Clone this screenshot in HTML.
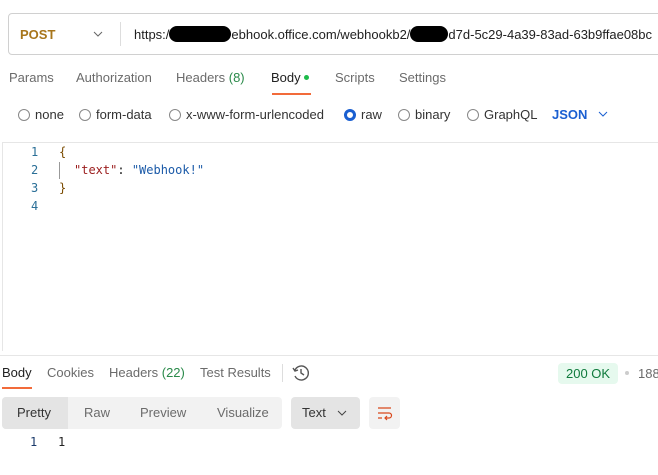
<!DOCTYPE html>
<html><head><style>
body{margin:0;width:658px;height:475px;overflow:hidden;background:#fff;font-family:"Liberation Sans",sans-serif;font-size:13px;color:#212121;position:relative}
.a{position:absolute;white-space:nowrap}
.g{color:#6b6b6b}
.rad{display:inline-block;width:12px;height:12px;border:1px solid #888;border-radius:50%;vertical-align:-2px;margin-right:5px;box-sizing:border-box}
.mono{font-family:"DejaVu Sans Mono","Liberation Mono",monospace;font-size:12px}
.ln{color:#2a6f97}
</style></head><body>
<div class="a" style="left:8px;top:13px;width:660px;height:40px;border:1px solid #d0d0d0;border-radius:4px"></div>
<div class="a" style="left:20px;top:27px;color:#a7751b;font-weight:bold">POST</div>
<svg class="a" style="left:93px;top:30px" width="10" height="8"><path d="M1 2l4 4 4-4" stroke="#666" fill="none"/></svg>
<div class="a" style="left:120px;top:22px;width:1px;height:24px;background:#ddd"></div>
<div class="a" style="left:134px;top:26px">https:/<span style="display:inline-block;width:62px;height:16px;background:#000;border-radius:8px;vertical-align:-3px"></span>ebhook.office.com/webhookb2/<span style="display:inline-block;width:38px;height:16px;background:#000;border-radius:8px;vertical-align:-3px"></span>d7d-5c29-4a39-83ad-63b9ffae08bc</div>

<div class="a g" style="left:9px;top:70px">Params</div>
<div class="a g" style="left:76px;top:70px">Authorization</div>
<div class="a g" style="left:176px;top:70px">Headers <span style="color:#2a8a4a">(8)</span></div>
<div class="a" style="left:271px;top:70px">Body <span style="display:inline-block;width:5px;height:5px;background:#1dbb4a;border-radius:50%;vertical-align:2px"></span></div>
<div class="a" style="left:272px;top:93px;width:39px;height:2px;background:#f26b3a"></div>
<div class="a g" style="left:335px;top:70px">Scripts</div>
<div class="a g" style="left:399px;top:70px">Settings</div>

<div class="a" style="left:18px;top:107px;color:#333"><span class="rad"></span>none</div>
<div class="a" style="left:79px;top:107px;color:#333"><span class="rad"></span>form-data</div>
<div class="a" style="left:169px;top:107px;color:#333"><span class="rad"></span>x-www-form-urlencoded</div>
<div class="a" style="left:344px;top:107px;color:#333"><span class="rad" style="border:3px solid #1a5fd1"></span>raw</div>
<div class="a" style="left:398px;top:107px;color:#333"><span class="rad"></span>binary</div>
<div class="a" style="left:467px;top:107px;color:#333"><span class="rad"></span>GraphQL</div>
<div class="a" style="left:552px;top:107px;color:#1a5fd1;font-weight:bold">JSON</div>
<svg class="a" style="left:598px;top:110px" width="10" height="8"><path d="M1 2l4 4 4-4" stroke="#1a5fd1" fill="none"/></svg>

<div class="a" style="left:2px;top:142px;width:660px;height:208px;border-top:1px solid #e6e6e6;border-left:1px solid #e6e6e6"></div>
<div class="a mono ln" style="left:31px;top:145px">1</div>
<div class="a mono ln" style="left:31px;top:163px">2</div>
<div class="a mono ln" style="left:31px;top:181px">3</div>
<div class="a mono ln" style="left:31px;top:199px">4</div>
<div class="a mono" style="left:59px;top:145px;color:#7a4b00">{</div>
<div class="a" style="left:59px;top:162px;width:1px;height:17px;background:#999"></div>
<div class="a mono" style="left:74px;top:163px"><span style="color:#9b1c1c">"text"</span>: <span style="color:#1b5aa8">"Webhook!"</span></div>
<div class="a mono" style="left:59px;top:181px;color:#7a4b00">}</div>

<div class="a" style="left:0;top:355px;width:658px;height:1px;background:#e6e6e6"></div>
<div class="a" style="left:2px;top:365px">Body</div>
<div class="a" style="left:2px;top:387px;width:30px;height:2px;background:#f26b3a"></div>
<div class="a g" style="left:47px;top:365px">Cookies</div>
<div class="a g" style="left:109px;top:365px">Headers <span style="color:#2a8a4a">(22)</span></div>
<div class="a g" style="left:200px;top:365px">Test Results</div>
<div class="a" style="left:282px;top:364px;width:1px;height:18px;background:#ddd"></div>
<svg class="a" style="left:292px;top:364px" width="18" height="18" viewBox="0 0 18 18"><path d="M3 6A7 7 0 1 1 3 12M9 5v4l3 2M1 4l2 3 3-1" stroke="#555" stroke-width="1.4" fill="none"/></svg>
<div class="a" style="left:558px;top:363px;width:60px;height:21px;background:#e6f9ee;border-radius:4px"></div>
<div class="a" style="left:566px;top:366px;color:#0f7a3c">200 OK</div>
<div class="a" style="left:625px;top:371px;width:4px;height:4px;border-radius:50%;background:#ccc"></div>
<div class="a g" style="left:638px;top:366px">188</div>

<div class="a" style="left:2px;top:397px;width:280px;height:32px;background:#f2f2f2;border-radius:4px"></div>
<div class="a" style="left:2px;top:397px;width:66px;height:32px;background:#e4e4e4;border-radius:4px 0 0 4px"></div>
<div class="a" style="left:17px;top:405px;color:#333">Pretty</div>
<div class="a g" style="left:84px;top:405px">Raw</div>
<div class="a g" style="left:140px;top:405px">Preview</div>
<div class="a g" style="left:217px;top:405px">Visualize</div>
<div class="a" style="left:291px;top:397px;width:69px;height:32px;background:#e4e4e4;border-radius:4px"></div>
<div class="a" style="left:302px;top:405px;color:#333">Text</div>
<svg class="a" style="left:337px;top:409px" width="10" height="8"><path d="M1 2l4 4 4-4" stroke="#444" fill="none"/></svg>
<div class="a" style="left:369px;top:397px;width:31px;height:32px;background:#f2f2f2;border-radius:4px"></div>
<svg class="a" style="left:376px;top:404px" width="18" height="18" viewBox="0 0 18 18"><path d="M2 4h13M2 9h11a2.5 2.5 0 0 1 0 5h-4M11 12l-2 2 2 2M2 14h4" stroke="#d9481c" stroke-width="1.2" fill="none"/></svg>
<div class="a mono" style="left:30px;top:435px;color:#1b3a6b">1</div>
<div class="a mono" style="left:58px;top:435px;color:#222">1</div>
</body></html>
